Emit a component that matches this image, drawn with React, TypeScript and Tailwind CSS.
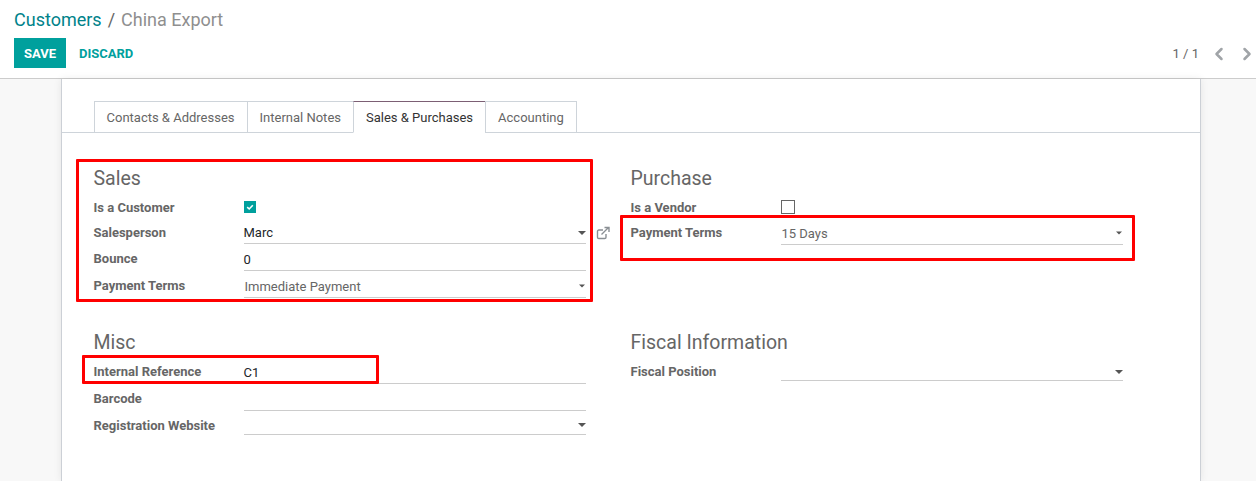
import { ChevronLeft, ChevronRight } from "lucide-react";

function Field({
  label,
  value,
  muted,
  select,
  small,
  rowClass,
  labelClass,
  valueClass,
  caretClass = "top-1/2",
}: {
  label: string;
  value?: string;
  muted?: boolean;
  select?: boolean;
  small?: boolean;
  rowClass: string;
  labelClass: string;
  valueClass?: string;
  caretClass?: string;
}) {
  return (
    <div className={`flex ${rowClass}`}>
      <div className={`w-[150px] shrink-0 text-[13px] leading-[20px] font-bold text-[#666] ${labelClass}`}>{label}</div>
      <div
        className={`relative h-full flex-1 border-b border-[#ccc] text-[13px] leading-[20px] ${valueClass ?? ""} ${
          muted ? "pl-px text-[#666]" : "text-[#212529]"
        }`}
      >
        {value}
        {select && (
          <span
            className={`absolute right-0 h-0 w-0 border-x-[4px] border-t-[4px] border-x-transparent border-t-[#555] ${caretClass} ${
              small ? "scale-75" : ""
            }`}
          />
        )}
      </div>
    </div>
  );
}

export default function App() {
  const tabs = ["Contacts & Addresses", "Internal Notes", "Sales & Purchases", "Accounting"];

  return (
    <div className="relative h-[481px] w-[1256px] overflow-hidden bg-[#f8f8f8] font-['Roboto',sans-serif]">
      <header className="h-[79px] border-b border-[#ccc] bg-white pl-[14px]">
        <div className="flex h-[38px] items-center pt-[2px] text-[18px] leading-[24px]">
          <span className="text-[#00828a]">Customers</span>
          <span className="mx-[6px] text-[#666]">/</span>
          <span className="text-[#8f8f8f]">China Export</span>
        </div>
        <div className="flex items-center justify-between">
          <div className="flex items-center">
            <button className="h-[30px] w-[52px] bg-[#00a09d] pt-px text-[13px] font-bold text-white">SAVE</button>
            <button className="ml-[13px] pt-px text-[13px] font-bold text-[#00a09d]">DISCARD</button>
          </div>
          <div className="-mr-px flex items-center pt-px text-[13px] text-[#666]">
            <span>1 / 1</span>
            <ChevronLeft className="ml-[10px] h-[20px] w-[20px] text-[#a0a4a8]" strokeWidth={3} />
            <ChevronRight className="ml-[8px] h-[20px] w-[20px] text-[#a0a4a8]" strokeWidth={3} />
          </div>
        </div>
      </header>

      <main className="ml-[61px] h-[402px] w-[1140px] border-x border-[#ccd0d6] bg-white pt-[22px] shadow-[0_0_8px_rgba(0,0,0,0.08)]">
        <div className="flex h-[32px] border-b border-[#ced4da] pl-[31.5px]">
          {tabs.map((tab) => {
            const active = tab === "Sales & Purchases";
            return (
              <div
                key={tab}
                className={`-ml-px h-[32px] border border-[#ced4da] px-[12px] pt-[7px] text-[13px] leading-[18px] first:ml-0 ${
                  active ? "border-t-[#7c5f74] border-b-white text-[#333]" : "text-[#666]"
                }`}
              >
                {tab}
              </div>
            );
          })}
        </div>

        <div className="grid grid-cols-[492.5px_492.5px] gap-x-[44.5px] pl-[31.5px] pt-[31px]">
          <section>
            <h2 className="h-[28px] pt-px text-[19.5px] leading-[28px] text-[#666]">Sales</h2>
            <div className="flex h-[26px] items-center pt-[4px]">
              <div className="w-[150px] pt-[2px] text-[13px] font-bold text-[#666]">Is a Customer</div>
              <span className="flex h-[12px] w-[12px] items-center justify-center bg-[#00a09d]">
                <svg viewBox="0 0 12 12" className="h-[12px] w-[12px]">
                  <path d="M3.2 6.2 5.2 8 8.8 4.3" fill="none" stroke="#fff" strokeWidth="1.6" />
                </svg>
              </span>
            </div>
            <Field label="Salesperson" value="Marc" select rowClass="h-[26px]" labelClass="pt-[5px]" valueClass="pt-[5px]" />
            <Field label="Bounce" value="0" rowClass="h-[27px]" labelClass="pt-[5px]" valueClass="pt-[6px]" />
            <Field
              label="Payment Terms"
              value="Immediate Payment"
              muted
              select
              small
              rowClass="h-[27px]"
              labelClass="pt-[5px]"
              valueClass="pt-[6px]"
            />
          </section>

          <section className="relative">
            <h2 className="h-[28px] pt-px text-[19.5px] leading-[28px] text-[#666]">Purchase</h2>
            <div className="flex h-[26px] items-center pt-[4px]">
              <div className="w-[150px] pt-[2px] text-[13px] font-bold text-[#666]">Is a Vendor</div>
              <span className="h-[14px] w-[14px] border border-[#666] bg-white" />
            </div>
            <Field
              label="Payment Terms"
              value="15 Days"
              muted
              select
              small
              rowClass="h-[27px]"
              labelClass="pt-[5px]"
              valueClass="pt-[6px]"
            />
            <span className="absolute left-[-35px] top-[62px] text-[#8a8f94]">
              <svg viewBox="0 0 14 14" className="h-[14px] w-[14px]" fill="none" stroke="currentColor" strokeWidth="1.4">
                <path d="M10 8v3.2a1.3 1.3 0 0 1-1.3 1.3H2.8a1.3 1.3 0 0 1-1.3-1.3V5.3A1.3 1.3 0 0 1 2.8 4H7" />
                <path d="M5.500 8.500 12 2M8.500 1.500h4.500V6" />
              </svg>
            </span>
          </section>

          <section className="mt-[30px]">
            <h2 className="h-[28px] pt-px text-[19.5px] leading-[28px] text-[#666]">Misc</h2>
            <Field label="Internal Reference" value="C1" rowClass="h-[28px]" labelClass="pt-[6px]" valueClass="pt-[7px]" />
            <Field label="Barcode" rowClass="h-[27px]" labelClass="pt-[5px]" />
            <Field label="Registration Website" select rowClass="h-[24px]" labelClass="pt-[5px]" />
          </section>

          <section className="mt-[30px]">
            <h2 className="h-[28px] pt-px text-[19.5px] leading-[28px] text-[#666]">Fiscal Information</h2>
            <Field label="Fiscal Position" select rowClass="h-[25px]" labelClass="pt-[6px]" caretClass="top-[14px]" />
          </section>
        </div>
      </main>

      <div className="absolute left-[76px] top-[159px] h-[143px] w-[517px] rounded-[1px] border-[3px] border-[#f00]" />
      <div className="absolute left-[620px] top-[215px] h-[46px] w-[515px] rounded-[1px] border-[3px] border-[#f00]" />
      <div className="absolute left-[82px] top-[355px] h-[29px] w-[297px] rounded-[1px] border-[3px] border-[#f00]" />
    </div>
  );
}
